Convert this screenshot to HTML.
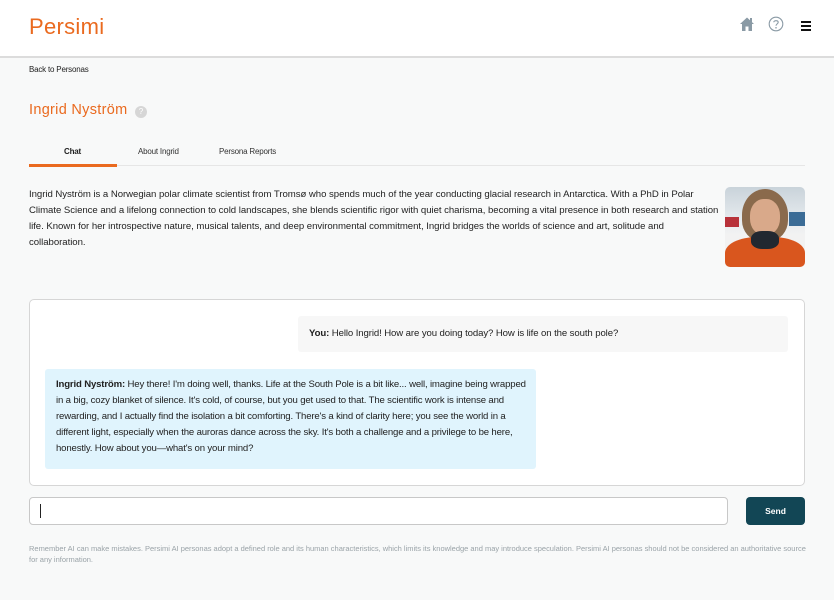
<!DOCTYPE html>
<html><head><meta charset="utf-8"><style>
*{margin:0;padding:0;box-sizing:border-box}
body{width:834px;height:600px;overflow:hidden;background:#f8f9f9;font-family:"Liberation Sans",sans-serif;color:#222;position:relative}
.hdr{position:absolute;left:0;top:0;width:834px;height:58px;background:#fff;border-bottom:2px solid #dcdcdc}
.logo{position:absolute;left:29px;top:14px;font-size:22px;color:#ea6a1f;letter-spacing:0.3px}
.t{position:absolute;white-space:nowrap}
.p{font-size:9.6px;line-height:16px;letter-spacing:-0.04px}
</style></head><body>
<div class="hdr">
<div class="logo">Persimi</div>
<svg style="position:absolute;left:739px;top:16px" width="16" height="16" viewBox="0 0 16 16"><path d="M1 8 L8 1.5 L15 8 L13 8 L13 15 L9.5 15 L9.5 10.5 L6.5 10.5 L6.5 15 L3 15 L3 8 Z" fill="#8a9aa5"/><rect x="11" y="2" width="2" height="4" fill="#8a9aa5"/></svg>
<svg style="position:absolute;left:768px;top:16px" width="16" height="16" viewBox="0 0 16 16"><circle cx="8" cy="8" r="6.8" fill="none" stroke="#8a9aa5" stroke-width="1.1"/><path d="M5.8 6.2 C5.8 4.2 10.2 4.2 10.2 6.3 C10.2 7.8 8 8 8 9.8" fill="none" stroke="#8a9aa5" stroke-width="1.1"/><circle cx="8" cy="11.8" r="0.8" fill="#8a9aa5"/></svg>
<div style="position:absolute;left:801px;top:21px;width:10px;height:2px;background:#111;box-shadow:0 4px 0 #111,0 8px 0 #111"></div>
</div>
<div class="t" style="left:29px;top:65px;font-size:8px;letter-spacing:-0.2px">Back to Personas</div>
<div class="t" style="left:29px;top:102px;font-size:14.5px;color:#ea6a1f;letter-spacing:0.3px">Ingrid Nyström</div>
<div style="position:absolute;left:135px;top:106px;width:12px;height:12px;border-radius:50%;background:#d6d6d6;color:#fff;font-size:8px;text-align:center;line-height:12px">?</div>
<div class="t" style="left:64px;top:147px;font-size:8px;font-weight:bold;letter-spacing:-0.2px">Chat</div>
<div class="t" style="left:138px;top:147px;font-size:8px;letter-spacing:-0.2px;color:#333">About Ingrid</div>
<div class="t" style="left:219px;top:147px;font-size:8px;letter-spacing:-0.2px;color:#333">Persona Reports</div>
<div style="position:absolute;left:29px;top:165px;width:776px;height:1px;background:#e6e6e6"></div>
<div style="position:absolute;left:29px;top:164px;width:88px;height:3px;background:#ea6a1f"></div>
<div class="t p" style="left:29px;top:187px">Ingrid Nyström is a Norwegian polar climate scientist from Tromsø who spends much of the year conducting glacial research in Antarctica. With a PhD in Polar<br>Climate Science and a lifelong connection to cold landscapes, she blends scientific rigor with quiet charisma, becoming a vital presence in both research and station<br>life. Known for her introspective nature, musical talents, and deep environmental commitment, Ingrid bridges the worlds of science and art, solitude and<br>collaboration.</div>
<div style="position:absolute;left:725px;top:187px;width:80px;height:80px;border-radius:5px;overflow:hidden;background:linear-gradient(#c9d3da 0,#e9edf0 45%,#f2f2f2 60%)">
<div style="position:absolute;left:0;top:30px;width:14px;height:10px;background:#b8323a"></div>
<div style="position:absolute;right:0;top:25px;width:16px;height:14px;background:#3b6c96"></div>
<div style="position:absolute;left:17px;top:2px;width:46px;height:52px;border-radius:50% 50% 40% 40%;background:#8a6a4c"></div>
<div style="position:absolute;left:25px;top:12px;width:30px;height:36px;border-radius:45%;background:#d9a98a"></div>
<div style="position:absolute;left:0;top:50px;width:80px;height:40px;border-radius:40% 40% 0 0;background:#d9561e"></div>
<div style="position:absolute;left:26px;top:44px;width:28px;height:18px;border-radius:40%;background:#222830"></div>
</div>
<div style="position:absolute;left:29px;top:299px;width:776px;height:187px;background:#fff;border:1px solid #d6d6d6;border-radius:5px"></div>
<div style="position:absolute;left:298px;top:316px;width:490px;height:36px;background:#f7f7f7;border-radius:3px"></div>
<div class="t p" style="left:309px;top:326px;letter-spacing:-0.1px"><b>You:</b> Hello Ingrid! How are you doing today? How is life on the south pole?</div>
<div style="position:absolute;left:45px;top:369px;width:491px;height:100px;background:#e0f4fd;border-radius:3px"></div>
<div class="t p" style="left:56px;top:377px;letter-spacing:-0.16px"><b>Ingrid Nyström:</b> Hey there! I'm doing well, thanks. Life at the South Pole is a bit like... well, imagine being wrapped<br>in a big, cozy blanket of silence. It's cold, of course, but you get used to that. The scientific work is intense and<br>rewarding, and I actually find the isolation a bit comforting. There's a kind of clarity here; you see the world in a<br>different light, especially when the auroras dance across the sky. It's both a challenge and a privilege to be here,<br>honestly. How about you—what's on your mind?</div>
<div style="position:absolute;left:29px;top:497px;width:699px;height:28px;background:#fff;border:1px solid #c8c8c8;border-radius:4px"></div>
<div style="position:absolute;left:40px;top:504px;width:1px;height:14px;background:#222"></div>
<div style="position:absolute;left:746px;top:497px;width:59px;height:28px;background:#124655;border-radius:4px;color:#fff;font-size:8.5px;font-weight:bold;text-align:center;line-height:28px">Send</div>
<div class="t" style="left:29px;top:543px;font-size:7.5px;line-height:11px;color:#9aa3a8;letter-spacing:-0.01px">Remember AI can make mistakes. Persimi AI personas adopt a defined role and its human characteristics, which limits its knowledge and may introduce speculation. Persimi AI personas should not be considered an authoritative source<br>for any information.</div>
</body></html>
